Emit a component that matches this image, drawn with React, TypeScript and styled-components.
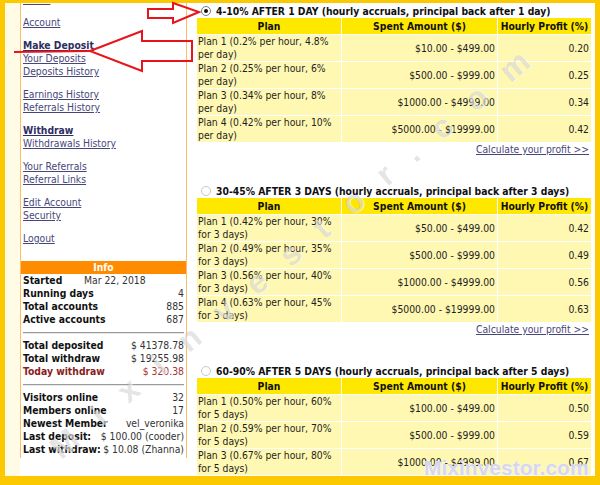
import React from 'react';
import styled, { createGlobalStyle } from 'styled-components';

const GlobalStyle = createGlobalStyle`
  body {
    margin: 0;
    font-family: "DejaVu Sans Condensed", "DejaVu Sans", Verdana, sans-serif;
    font-stretch: condensed;
    font-size: 10.3px;
    color: #1a1a1a;
    background: #fff;
  }
`;

const Page = styled.div`
  position: relative;
  width: 600px;
  height: 485px;
  overflow: hidden;
`;

const Frame = styled.div`
  box-sizing: border-box;
  width: 600px;
  height: 485px;
  border-style: solid;
  border-color: #fcc800;
  border-width: 3px 5px 9px 5px;
  overflow: hidden;
  display: flex;
  background: #fff;
`;

const Gutter = styled.div`
  width: 15px;
  flex: none;
  background: #fffbe4;
`;

const Sidebar = styled.div`
  width: 165px;
  flex: none;
  align-self: flex-start;
  border-left: 1px solid #ffbd6a;
  border-right: 1px solid #ffbd6a;
  margin-top: -10px;
  padding-bottom: 2px;
`;

const LinkGroup = styled.div`
  padding-left: 2px;
  margin-bottom: 10px;
`;

const NavLink = styled.a<{ $bold?: boolean }>`
  display: block;
  line-height: 13px;
  color: ${p => (p.$bold ? '#2e2e62' : '#46467a')};
  font-weight: ${p => (p.$bold ? 'bold' : 'normal')};
  text-decoration: underline;
  white-space: nowrap;
`;

const InfoHeader = styled.div`
  margin-top: 16px;
  background: #ff8c00;
  color: #fff;
  font-weight: bold;
  text-align: center;
  line-height: 13px;
`;

const InfoBody = styled.div`
  padding: 0 2px 0 2px;
`;

const InfoRow = styled.div<{ $red?: boolean }>`
  display: flex;
  line-height: 13px;
  white-space: nowrap;
  color: ${p => (p.$red ? '#8a1c1c' : '#111')};
`;

const InfoLabel = styled.span<{ $width?: number }>`
  font-weight: bold;
  flex: none;
  width: ${p => (p.$width ? `${p.$width}px` : 'auto')};
`;

const InfoValue = styled.span<{ $left?: boolean; $red?: boolean }>`
  flex: 1;
  text-align: ${p => (p.$left ? 'left' : 'right')};
  color: ${p => (p.$red ? '#a83232' : '#333')};
`;

const Rule = styled.div`
  height: 13px;
  display: flex;
  align-items: center;
  &::after {
    content: '';
    flex: 1;
    border-top: 1px solid #9a9a9a;
    border-bottom: 1px solid #e8e8e8;
  }
`;

const Main = styled.div`
  flex: 1;
  padding: 2px 5px 0 9px;
`;

const Section = styled.div`
  margin-bottom: 29px;
`;

const PlanTitle = styled.div`
  display: flex;
  align-items: center;
  line-height: 12px;
  font-weight: bold;
  color: #111;
  padding-left: 5px;
  white-space: nowrap;
`;

const Radio = styled.span<{ $checked?: boolean }>`
  box-sizing: border-box;
  width: 10px;
  height: 10px;
  border-radius: 50%;
  border: 1px solid ${p => (p.$checked ? '#7a7a7a' : '#c8c8c8')};
  background: #fff;
  margin-right: 5px;
  display: flex;
  align-items: center;
  justify-content: center;
  &::after {
    content: '';
    width: 4px;
    height: 4px;
    border-radius: 50%;
    background: ${p => (p.$checked ? '#111' : 'transparent')};
  }
`;

const PlanTable = styled.div`
  display: grid;
  grid-template-columns: 144px 155px 93px;
  gap: 1px;
  margin-left: 1px;
  margin-top: 1px;
`;

const HeadCell = styled.div`
  background: #ffe800;
  font-weight: bold;
  text-align: center;
  line-height: 16px;
  color: #111;
  white-space: nowrap;
`;

const Cell = styled.div<{ $right?: boolean }>`
  background: #fff8b2;
  line-height: 13px;
  min-height: 26px;
  padding: 0 2px 0 1px;
  display: flex;
  align-items: center;
  justify-content: ${p => (p.$right ? 'flex-end' : 'flex-start')};
  text-align: ${p => (p.$right ? 'right' : 'left')};
  color: #1e1e1e;
`;

const CalcLink = styled.a`
  display: block;
  text-align: right;
  line-height: 14px;
  color: #46467a;
  text-decoration: underline;
  padding-right: 2px;
`;

const Overlay = styled.svg`
  position: absolute;
  left: 0;
  top: 0;
  pointer-events: none;
`;

const Watermark = styled.div`
  position: absolute;
  left: -50px;
  top: 228px;
  width: 700px;
  text-align: center;
  transform: rotate(-40deg);
  font-family: "Liberation Sans", Arial, sans-serif;
  font-weight: bold;
  font-size: 32px;
  letter-spacing: 26px;
  color: rgba(140, 140, 140, 0.24);
  text-shadow: 1px 1px 0 rgba(255, 255, 255, 0.6);
  pointer-events: none;
  white-space: nowrap;
`;

const Logo = styled.div`
  position: absolute;
  left: 424px;
  top: 456px;
  font-family: "Liberation Sans", Arial, sans-serif;
  font-weight: bold;
  font-size: 21px;
  color: #d6d6ee;
  text-shadow: 0 0 1px #fff, 1px 1px 0 #f4f4fb;
  pointer-events: none;
  white-space: nowrap;
`;

type Plan = { name: string; amount: string; profit: string };

const sections: { title: string; checked?: boolean; plans: Plan[] }[] = [
  {
    title: '4-10% AFTER 1 DAY (hourly accruals, principal back after 1 day)',
    checked: true,
    plans: [
      { name: 'Plan 1 (0.2% per hour, 4.8% per day)', amount: '$10.00 - $499.00', profit: '0.20' },
      { name: 'Plan 2 (0.25% per hour, 6% per day)', amount: '$500.00 - $999.00', profit: '0.25' },
      { name: 'Plan 3 (0.34% per hour, 8% per day)', amount: '$1000.00 - $4999.00', profit: '0.34' },
      { name: 'Plan 4 (0.42% per hour, 10% per day)', amount: '$5000.00 - $19999.00', profit: '0.42' },
    ],
  },
  {
    title: '30-45% AFTER 3 DAYS (hourly accruals, principal back after 3 days)',
    plans: [
      { name: 'Plan 1 (0.42% per hour, 30% for 3 days)', amount: '$50.00 - $499.00', profit: '0.42' },
      { name: 'Plan 2 (0.49% per hour, 35% for 3 days)', amount: '$500.00 - $999.00', profit: '0.49' },
      { name: 'Plan 3 (0.56% per hour, 40% for 3 days)', amount: '$1000.00 - $4999.00', profit: '0.56' },
      { name: 'Plan 4 (0.63% per hour, 45% for 3 days)', amount: '$5000.00 - $19999.00', profit: '0.63' },
    ],
  },
  {
    title: '60-90% AFTER 5 DAYS (hourly accruals, principal back after 5 days)',
    plans: [
      { name: 'Plan 1 (0.50% per hour, 60% for 5 days)', amount: '$100.00 - $499.00', profit: '0.50' },
      { name: 'Plan 2 (0.59% per hour, 70% for 5 days)', amount: '$500.00 - $999.00', profit: '0.59' },
      { name: 'Plan 3 (0.67% per hour, 80% for 5 days)', amount: '$1000.00 - $4999.00', profit: '0.67' },
    ],
  },
];

const navGroups: { label: string; bold?: boolean }[][] = [
  [{ label: 'Home' }],
  [{ label: 'Account' }],
  [{ label: 'Make Deposit', bold: true }, { label: 'Your Deposits' }, { label: 'Deposits History' }],
  [{ label: 'Earnings History' }, { label: 'Referrals History' }],
  [{ label: 'Withdraw', bold: true }, { label: 'Withdrawals History' }],
  [{ label: 'Your Referrals' }, { label: 'Referral Links' }],
  [{ label: 'Edit Account' }, { label: 'Security' }],
  [{ label: 'Logout' }],
];

const App: React.FC = () => {
  return (
    <Page>
      <GlobalStyle />
      <Frame>
        <Gutter />
        <Sidebar>
          {navGroups.map((group, i) => (
            <LinkGroup key={i}>
              {group.map(link => (
                <NavLink key={link.label} href="#" $bold={link.bold}>
                  {link.label}
                </NavLink>
              ))}
            </LinkGroup>
          ))}
          <InfoHeader>Info</InfoHeader>
          <InfoBody>
            <InfoRow>
              <InfoLabel $width={61}>Started</InfoLabel>
              <InfoValue $left>Mar 22, 2018</InfoValue>
            </InfoRow>
            <InfoRow>
              <InfoLabel>Running days</InfoLabel>
              <InfoValue>4</InfoValue>
            </InfoRow>
            <InfoRow>
              <InfoLabel>Total accounts</InfoLabel>
              <InfoValue>885</InfoValue>
            </InfoRow>
            <InfoRow>
              <InfoLabel>Active accounts</InfoLabel>
              <InfoValue>687</InfoValue>
            </InfoRow>
            <Rule />
            <InfoRow>
              <InfoLabel>Total deposited</InfoLabel>
              <InfoValue>$ 41378.78</InfoValue>
            </InfoRow>
            <InfoRow>
              <InfoLabel>Total withdraw</InfoLabel>
              <InfoValue>$ 19255.98</InfoValue>
            </InfoRow>
            <InfoRow $red>
              <InfoLabel>Today withdraw</InfoLabel>
              <InfoValue $red>$ 320.38</InfoValue>
            </InfoRow>
            <Rule />
            <InfoRow>
              <InfoLabel>Visitors online</InfoLabel>
              <InfoValue>32</InfoValue>
            </InfoRow>
            <InfoRow>
              <InfoLabel>Members online</InfoLabel>
              <InfoValue>17</InfoValue>
            </InfoRow>
            <InfoRow>
              <InfoLabel>Newest Member</InfoLabel>
              <InfoValue>vel_veronika</InfoValue>
            </InfoRow>
            <InfoRow>
              <InfoLabel>Last deposit:</InfoLabel>
              <InfoValue>$ 100.00 (cooder)</InfoValue>
            </InfoRow>
            <InfoRow>
              <InfoLabel>Last withdraw:</InfoLabel>
              <InfoValue>$ 10.08 (Zhanna)</InfoValue>
            </InfoRow>
          </InfoBody>
        </Sidebar>
        <Main>
          {sections.map((s, i) => (
            <Section key={i}>
              <PlanTitle>
                <Radio $checked={s.checked} />
                {s.title}
              </PlanTitle>
              <PlanTable>
                <HeadCell>Plan</HeadCell>
                <HeadCell>Spent Amount ($)</HeadCell>
                <HeadCell>Hourly Profit (%)</HeadCell>
                {s.plans.map(p => (
                  <React.Fragment key={p.name}>
                    <Cell>{p.name}</Cell>
                    <Cell $right>{p.amount}</Cell>
                    <Cell $right>{p.profit}</Cell>
                  </React.Fragment>
                ))}
              </PlanTable>
              <CalcLink href="#">Calculate your profit &gt;&gt;</CalcLink>
            </Section>
          ))}
        </Main>
      </Frame>

      <Watermark>Mixinvestor.com</Watermark>
      <Logo>Mixinvestor.com</Logo>

      <Overlay width="600" height="485" viewBox="0 0 600 485">
        <g fill="none" stroke="#e8141c" strokeWidth="2" strokeLinejoin="miter">
          <polygon points="148,9 173,9 173,3 199,12 173,23 173,18 148,18" />
          <polygon points="90,51 142,31 142,41 192,41 192,61 142,61 142,71" />
        </g>
        <line x1="14" y1="52" x2="91" y2="51" stroke="#e8141c" strokeWidth="2" />
      </Overlay>
    </Page>
  );
};

export default App;
